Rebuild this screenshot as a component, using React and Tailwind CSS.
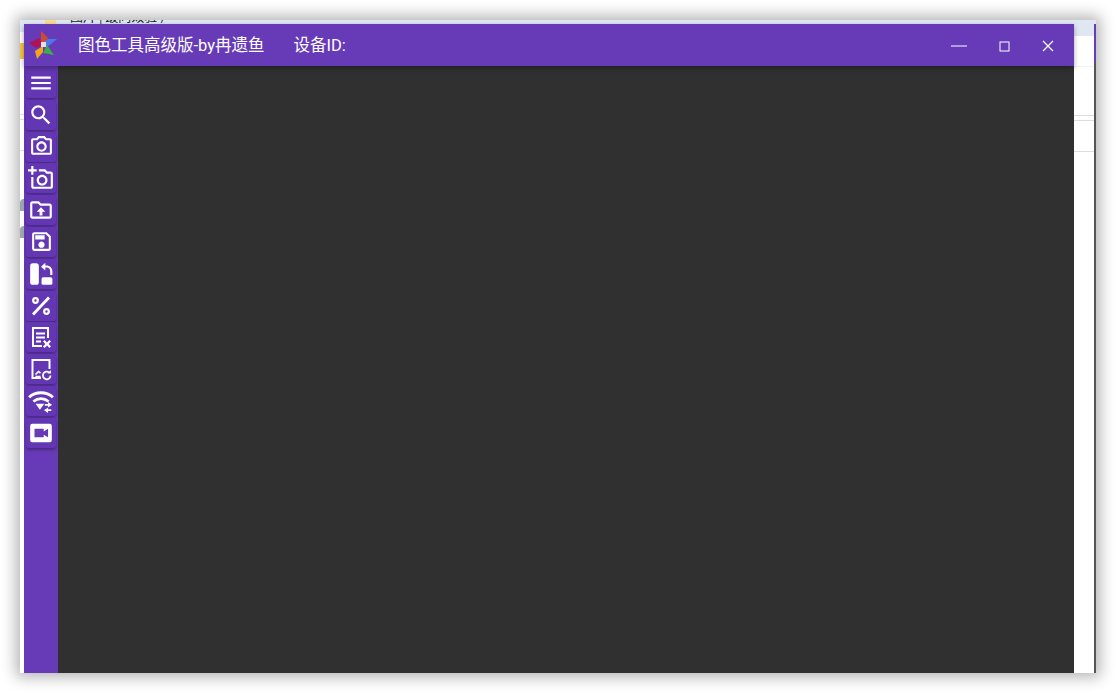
import React from "react";
import {
  MdMenu,
  MdSearch,
  MdOutlinePhotoCamera,
  MdOutlineAddAPhoto,
  MdOutlineSave,
} from "react-icons/md";

function FolderUpIcon() {
  return (
    <svg viewBox="0 0 24 24" width="26" height="26" fill="white">
      <path d="M20 6h-8l-2-2H4c-1.100 0-2 .9-2 2v12c0 1.100.9 2 2 2h16c1.100 0 2-.9 2-2V8c0-1.100-.9-2-2-2zm0 12H4V6h5.200l2 2H20z" />
      <path d="M12 9.500l4 4h-2.700V17h-2.600v-3.500H8z" />
    </svg>
  );
}

function LayoutSwapIcon() {
  return (
    <svg viewBox="0 0 24 24" width="26" height="26" fill="white">
      <rect x="2" y="2" width="8" height="20" rx="2.5" />
      <rect x="12.5" y="15" width="10" height="7" rx="1.5" />
      <path d="M16 1.5v2.600h1.200c2.800 0 5.300 2.200 5.300 5.400v3.500h-2V9.500c0-2-1.500-3.400-3.300-3.400H16v2.700l-4-3.600z" />
    </svg>
  );
}

function PercentIcon() {
  return (
    <svg viewBox="0 0 24 24" width="24" height="24" fill="none" stroke="white">
      <path d="M4 20.500L20 3.500" strokeWidth="2.800" />
      <circle cx="6.500" cy="6.500" r="2.300" strokeWidth="2.200" />
      <circle cx="17.500" cy="17.500" r="2.300" strokeWidth="2.200" />
    </svg>
  );
}

function NoteCloseIcon() {
  return (
    <svg viewBox="0 0 24 24" width="24" height="24" fill="white">
      <path d="M3 2h17v11h-2V4H5v16h8v2H3z" />
      <path d="M7 7.500h9v2H7zM7 11.500h9v2H7zM7 15.500h5v2H7z" />
      <path d="M15.600 15l2.400 2.400 2.400-2.400 1.600 1.600-2.400 2.400 2.400 2.400-1.600 1.600-2.400-2.400-2.400 2.400-1.600-1.600 2.400-2.400-2.400-2.400z" />
    </svg>
  );
}

function ImageRefreshIcon() {
  return (
    <svg viewBox="0 0 24 24" width="24" height="24" fill="none" stroke="white" strokeWidth="2">
      <path d="M12 21H3.500V3h17v9" />
      <path d="M6.500 17.500l3-3 2 1.500M6.500 19.500h5" strokeWidth="1.600" />
      <path d="M21.500 18.500a3.800 3.800 0 1 1-1.200-2.800" strokeWidth="1.800" />
      <path d="M22 13v3.500h-3.500z" fill="white" stroke="none" />
    </svg>
  );
}

function WifiSwapIcon() {
  return (
    <svg viewBox="0 0 24 24" width="26" height="26" fill="none" stroke="white">
      <path d="M1 8.500C7 3 17 3 23 8.500" strokeWidth="2.600" />
      <path d="M5 12.500c4.200-3.500 9.800-3.500 14 0" strokeWidth="2.600" />
      <path d="M8 15.500h8L12 21z" fill="white" stroke="none" transform="translate(-1 -1)" />
      <path d="M15.500 15.500h6M21.500 20.500h-6" strokeWidth="1.600" />
      <path d="M18.500 13l3.500 2.500-3.500 2.500zM18.500 18l-3.500 2.500 3.500 2.500z" fill="white" stroke="none" />
    </svg>
  );
}

function VideoBoxIcon() {
  return (
    <svg viewBox="0 0 24 24" width="26" height="26">
      <rect x="2" y="3.500" width="20" height="17" rx="2" fill="white" />
      <path d="M6 8h8.500v2.500l4-2.500v8l-4-2.500V16H6z" fill="#673ab7" />
    </svg>
  );
}

function Logo() {
  return (
    <svg viewBox="0 0 30 30" width="30" height="30">
      <polygon points="13,1 20,8 18,14 13,12" fill="#d04a30" />
      <polygon points="29,9 18,18 16,12 20,9" fill="#4a78ee" />
      <polygon points="26,25 19,15 15,23" fill="#3faa4e" />
      <polygon points="9,29 7,21 15,16 15,22" fill="#f4a51c" />
      <polygon points="1,13 11,8 15,15 8,18" fill="#ad1457" />
      <rect x="13" y="12" width="5" height="5" fill="#e9e0e0" />
    </svg>
  );
}

const tools = [
  <MdMenu size={26} color="white" />,
  <MdSearch size={26} color="white" />,
  <MdOutlinePhotoCamera size={25} color="white" />,
  <MdOutlineAddAPhoto size={26} color="white" />,
  <FolderUpIcon />,
  <MdOutlineSave size={25} color="white" />,
  <LayoutSwapIcon />,
  <PercentIcon />,
  <NoteCloseIcon />,
  <ImageRefreshIcon />,
  <WifiSwapIcon />,
  <VideoBoxIcon />,
];

export default function App() {
  return (
    <div className="w-[1116px] h-[693px] bg-white p-5 overflow-hidden font-['Roboto','Noto_Sans_CJK_SC',sans-serif]">
      <div className="w-[1076px] h-[653px] flex flex-col bg-white shadow-[0_0_14px_4px_rgba(0,0,0,0.3)]">
        {/* what sits behind the window, only a sliver shows */}
        <div className="h-1 bg-[#dfe7f2] overflow-hidden flex items-end text-[13px] leading-4 text-[#222] whitespace-nowrap">
          <div className="w-[11px] h-1 ml-[25px] bg-[#f8dc8c] shrink-0" />
          <span className="ml-[14px] font-['Noto_Sans_CJK_SC',sans-serif]">图片 | 最同效验 )</span>
          <span className="ml-4">^</span>
          <span className="ml-5 font-bold">T</span>
        </div>

        <div className="flex flex-1 min-h-0">
          <div className="w-1 shrink-0 flex flex-col">
            <div className="h-2 bg-[#dfe7f2]" />
            <div className="h-4 mt-[11px] bg-[#f5c542]" />
            <div className="h-px mt-[55px] bg-[#ddd]" />
            <div className="h-px mt-1 bg-[#ddd]" />
            <div className="h-px mt-[30px] bg-[#ddd]" />
            <div className="h-3 mt-[48px] rounded-tl-full bg-[#9aa5ad]" />
            <div className="h-3 mt-[15px] rounded-tl-full bg-[#9aa5ad]" />
          </div>

          <div className="w-[1050px] shrink-0 flex flex-col">
            <header className="h-[42px] shrink-0 bg-[#673ab7] flex items-center text-white relative z-10 shadow-[0_2px_5px_rgba(0,0,0,0.35)]">
              <div className="w-[34px] ml-[2px] flex justify-center">
                <Logo />
              </div>
              <span className="ml-[18px] pt-[2px] text-[16.5px]">图色工具高级版-by冉遗鱼</span>
              <span className="ml-[29px] pt-[2px] text-[16.5px]">设备ID:</span>
              <div className="ml-auto mr-1 pt-[2px] flex items-center">
                <button className="w-[46px] h-10 flex items-center justify-center">
                  <svg width="16" height="2" viewBox="0 0 16 2">
                    <path d="M0 1h16" stroke="white" />
                  </svg>
                </button>
                <button className="w-11 h-10 flex items-center justify-center">
                  <svg width="11" height="11" viewBox="0 0 11 11">
                    <rect x="1" y="1" width="9" height="9" fill="none" stroke="white" />
                  </svg>
                </button>
                <button className="w-11 h-10 flex items-center justify-center">
                  <svg width="12" height="12" viewBox="0 0 12 12">
                    <path d="M1 1l10 10M11 1L1 11" stroke="white" strokeWidth="1.200" />
                  </svg>
                </button>
              </div>
            </header>

            <div className="flex flex-1 min-h-0">
              <aside className="w-[34px] shrink-0 bg-[#673ab7] flex flex-col gap-[1.800px] pt-[2px] pl-[2px]">
                {tools.map((icon, i) => (
                  <button
                    key={i}
                    className="w-[30px] h-[30px] rounded-[3px] bg-[#6337b3] flex items-center justify-center shadow-[0_2px_3px_rgba(0,0,0,0.3)]"
                  >
                    {icon}
                  </button>
                ))}
              </aside>
              <main className="flex-1 bg-[#303030]" />
            </div>
          </div>

          <div className="w-[22px] shrink-0 flex">
            <div className="w-5 flex flex-col">
              <div className="h-3 bg-[#dfe7f2]" />
              <div className="h-px mt-[30px] bg-[#eef4fa]" />
              <div className="h-px mt-[48px] bg-[#ddd]" />
              <div className="h-px mt-1 bg-[#ddd]" />
              <div className="h-px mt-[30px] bg-[#ddd]" />
            </div>
            <div className="w-[2px] flex flex-col">
              <div className="h-[38px] bg-[#673ab7]" />
              <div className="flex-1 bg-[#555]" />
            </div>
          </div>
        </div>
      </div>
    </div>
  );
}
